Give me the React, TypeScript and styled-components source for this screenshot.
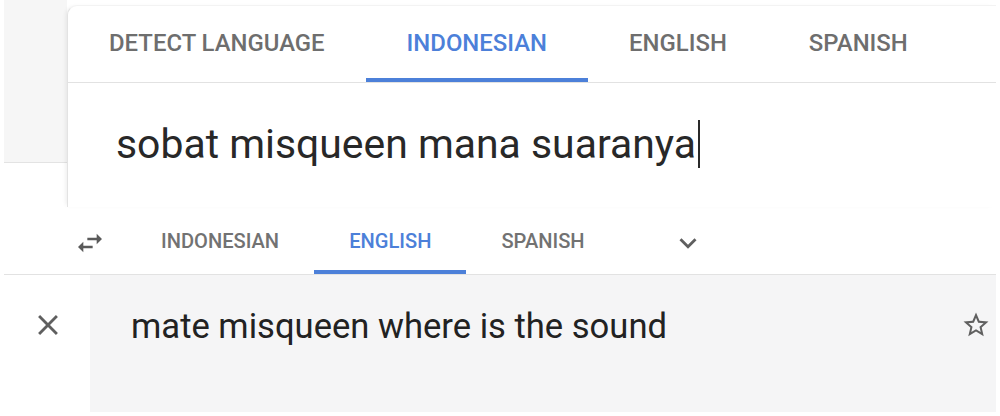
import React from "react";
import styled, { createGlobalStyle } from "styled-components";

const GlobalStyle = createGlobalStyle`
  html, body {
    margin: 0;
    padding: 0;
    background: #ffffff;
    font-family: Roboto, "Liberation Sans", Arial, sans-serif;
  }
`;

const Page = styled.div`
  width: 1000px;
  height: 416px;
  display: flex;
  flex-direction: column;
  overflow: hidden;
  background: #ffffff;
`;

/* ---------- Top: source panel ---------- */

const TopSection = styled.section`
  height: 207px;
  display: flex;
  flex-shrink: 0;
`;

const Gutter = styled.div`
  width: 63px;
  margin-left: 4px;
  height: 162px;
  background: #f6f6f6;
  border-bottom: 1px solid #e3e3e3;
  flex-shrink: 0;
`;

const SourceCard = styled.div`
  flex: 1;
  margin-top: 5px;
  margin-right: 4px;
  background: #ffffff;
  border-left: 1px solid #e3e3e3;
  border-top: 1px solid #f3f3f3;
  border-top-left-radius: 10px;
  box-shadow: -3px 0 4px -2px rgba(0, 0, 0, 0.08);
  display: flex;
  flex-direction: column;
`;

const TabBar = styled.div<{ $size: "lg" | "sm" }>`
  display: flex;
  align-items: stretch;
  border-bottom: 1px solid #e2e2e2;
  height: ${(p) => (p.$size === "lg" ? "76px" : "67px")};
  flex-shrink: 0;
`;

const Tab = styled.div<{ $active?: boolean; $size: "lg" | "sm" }>`
  display: flex;
  align-items: center;
  box-sizing: border-box;
  padding: ${(p) => (p.$size === "lg" ? "2px 41px 0" : "4px 35px 0")};
  font-size: ${(p) => (p.$size === "lg" ? "23.9px" : "20.1px")};
  font-weight: 500;
  letter-spacing: 0;
  color: ${(p) => (p.$active ? "#4c80d9" : p.$size === "lg" ? "#6e6e6e" : "#727272")};
  border-bottom: 4px solid ${(p) => (p.$active ? "#4c80d9" : "transparent")};
  white-space: nowrap;
`;

const SourceText = styled.div`
  padding: 33px 0 0 48px;
  font-size: 40.9px;
  line-height: 56px;
  color: #282828;
  white-space: nowrap;
`;

const Caret = styled.span`
  display: inline-block;
  width: 2px;
  height: 48px;
  margin-left: 2px;
  background: #2a2a2a;
  vertical-align: -10px;
`;

/* ---------- Bottom: target panel ---------- */

const BottomSection = styled.section`
  flex: 1;
  margin: 0 4px;
  display: flex;
  flex-direction: column;
`;

const SwapButton = styled.div`
  width: 122px;
  box-sizing: border-box;
  padding: 4px 0 0 70px;
  display: flex;
  align-items: center;
  color: #5a5a5a;
  flex-shrink: 0;
`;

const ChevronButton = styled.div`
  margin-left: 51px;
  padding-top: 4px;
  display: flex;
  align-items: center;
  color: #5f5f5f;
`;

const ResultRow = styled.div`
  height: 137px;
  display: flex;
`;

const CloseArea = styled.div`
  width: 86px;
  flex-shrink: 0;
  box-sizing: border-box;
  padding: 33px 0 0 27px;
  color: #5f5f5f;
`;

const ResultPanel = styled.div`
  flex: 1;
  background: #f5f5f6;
  display: flex;
  justify-content: space-between;
  align-items: flex-start;
`;

const ResultText = styled.div`
  padding: 27px 0 0 41px;
  font-size: 34.6px;
  line-height: 48px;
  color: #222222;
  white-space: nowrap;
`;

const StarButton = styled.div`
  padding: 35px 5px 0 0;
  color: #606060;
`;

const Icon = styled.svg<{ $size: number }>`
  width: ${(p) => p.$size}px;
  height: ${(p) => p.$size}px;
  display: block;
  fill: currentColor;
`;

export default function App() {
  return (
    <Page>
      <GlobalStyle />
      <TopSection>
        <Gutter />
        <SourceCard>
          <TabBar $size="lg">
            <Tab $size="lg">DETECT LANGUAGE</Tab>
            <Tab $size="lg" $active>
              INDONESIAN
            </Tab>
            <Tab $size="lg">ENGLISH</Tab>
            <Tab $size="lg">SPANISH</Tab>
          </TabBar>
          <SourceText>
            sobat misqueen mana suaranya
            <Caret />
          </SourceText>
        </SourceCard>
      </TopSection>

      <BottomSection>
        <TabBar $size="sm">
          <SwapButton>
            <Icon $size={32} viewBox="0 0 24 24">
              <path d="M6.99 11L3 15l3.99 4v-3H14v-2H6.99v-3zM21 9l-3.99-4v3H10v2h7.01v3L21 9z" />
            </Icon>
          </SwapButton>
          <Tab $size="sm">INDONESIAN</Tab>
          <Tab $size="sm" $active>
            ENGLISH
          </Tab>
          <Tab $size="sm">SPANISH</Tab>
          <ChevronButton>
            <Icon $size={34} viewBox="0 0 24 24">
              <path d="M16.59 8.59L12 13.17 7.41 8.59 6 10l6 6 6-6z" />
            </Icon>
          </ChevronButton>
        </TabBar>
        <ResultRow>
          <CloseArea>
            <Icon $size={34} viewBox="0 0 24 24">
              <path d="M19 6.41L17.59 5 12 10.59 6.41 5 5 6.41 10.59 12 5 17.59 6.41 19 12 13.41 17.59 19 19 17.59 13.41 12z" />
            </Icon>
          </CloseArea>
          <ResultPanel>
            <ResultText>mate misqueen where is the sound</ResultText>
            <StarButton>
              <Icon $size={30} viewBox="0 0 24 24">
                <path d="M22 9.24l-7.19-.62L12 2 9.19 8.63 2 9.24l5.46 4.73L5.82 21 12 17.27 18.18 21l-1.63-7.03L22 9.24zM12 15.4l-3.76 2.27 1-4.28-3.32-2.88 4.38-.38L12 6.1l1.71 4.04 4.38.38-3.32 2.88 1 4.28L12 15.4z" />
              </Icon>
            </StarButton>
          </ResultPanel>
        </ResultRow>
      </BottomSection>
    </Page>
  );
}
